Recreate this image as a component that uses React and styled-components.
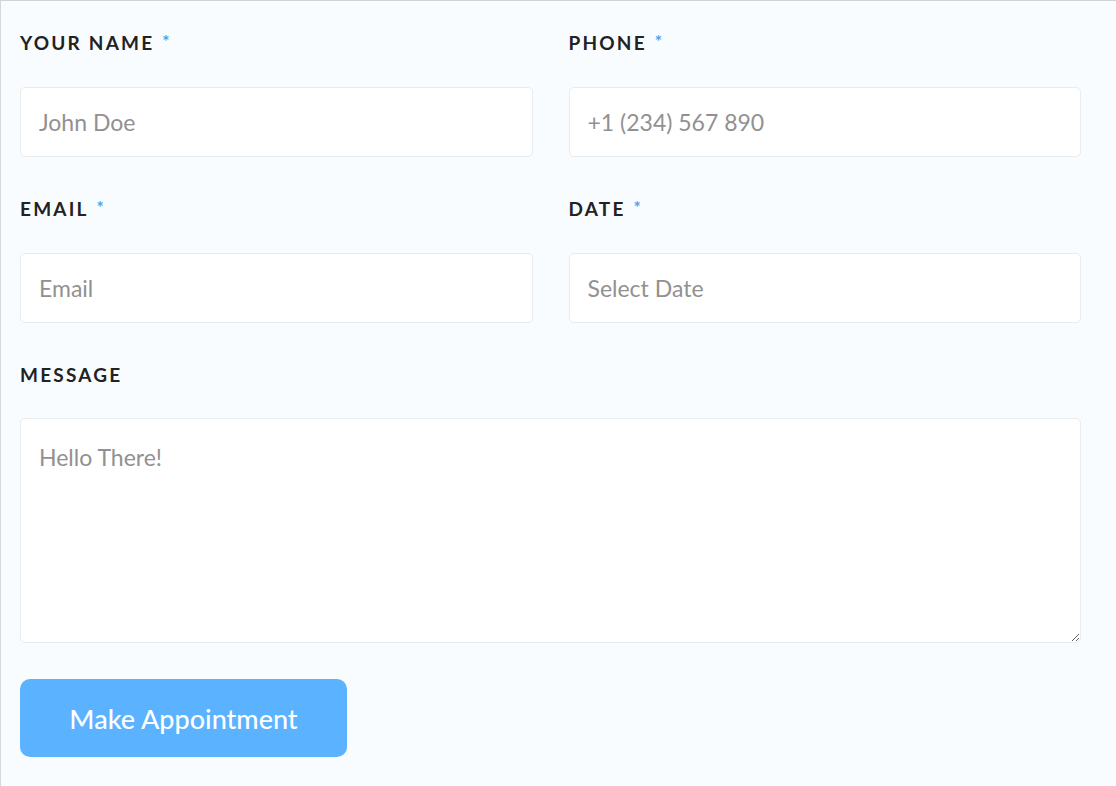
import React from "react";
import styled, { createGlobalStyle } from "styled-components";

const Global = createGlobalStyle`
  html, body { margin: 0; padding: 0; background: #f8fcff; }
  body { font-family: "Lato", "Noto Sans", sans-serif; }
  * { box-sizing: border-box; }
`;

const Page = styled.div`
  min-height: 786px;
  background: #f8fcff;
  border-top: 1px solid #cfd3d6;
  border-left: 1px solid #d5d8da;
  padding: 27px 35px 30px 19px;
`;

const Form = styled.form`
  display: grid;
  grid-template-columns: 1fr 1fr;
  column-gap: 36px;
  row-gap: 37px;
`;

const Field = styled.div`
  display: flex;
  flex-direction: column;
  gap: ${(p) => (p.$full ? "29px" : "30px")};
  margin-top: ${(p) => (p.$full ? "1px" : "0")};
  grid-column: ${(p) => (p.$full ? "1 / -1" : "auto")};
`;

const Label = styled.label`
  font-size: 19px;
  font-weight: 700;
  letter-spacing: 2.2px;
  text-transform: uppercase;
  color: #222;
  line-height: 28px;
`;

const Star = styled.span`
  color: #4aa3f0;
  font-size: 17px;
  margin-left: 8px;
  vertical-align: 2px;
`;

const Input = styled.input`
  height: 70px;
  width: 100%;
  border: 1px solid #e9ecee;
  border-radius: 5px;
  background: #fff;
  padding: 0 18px;
  font-family: inherit;
  font-size: 23px;
  color: #333;
  outline: none;
  &::placeholder { color: #919191; }
`;

const TextArea = styled.textarea`
  height: 225px;
  width: 100%;
  border: 1px solid #e9ecee;
  border-radius: 5px;
  background: #fff;
  padding: 24px 18px;
  font-family: inherit;
  font-size: 23px;
  color: #333;
  outline: none;
  resize: vertical;
  &::placeholder { color: #919191; }
`;

const Button = styled.button`
  margin-top: -1px;
  width: 327px;
  height: 78px;
  border: none;
  border-radius: 10px;
  background: #5bb2ff;
  color: #fff;
  font-family: inherit;
  font-size: 27px;
  font-weight: 500;
  cursor: pointer;
  justify-self: start;
`;

const fields = [
  { label: "Your Name", ph: "John Doe", req: true },
  { label: "Phone", ph: "+1 (234) 567 890", req: true },
  { label: "Email", ph: "Email", req: true },
  { label: "Date", ph: "Select Date", req: true },
];

export default function App() {
  return (
    <>
      <Global />
      <Page>
        <Form onSubmit={(e) => e.preventDefault()}>
          {fields.map((f) => (
            <Field key={f.label}>
              <Label>
                {f.label}
                {f.req && <Star>*</Star>}
              </Label>
              <Input placeholder={f.ph} />
            </Field>
          ))}
          <Field $full>
            <Label>Message</Label>
            <TextArea placeholder="Hello There!" />
          </Field>
          <Button type="submit">Make Appointment</Button>
        </Form>
      </Page>
    </>
  );
}
